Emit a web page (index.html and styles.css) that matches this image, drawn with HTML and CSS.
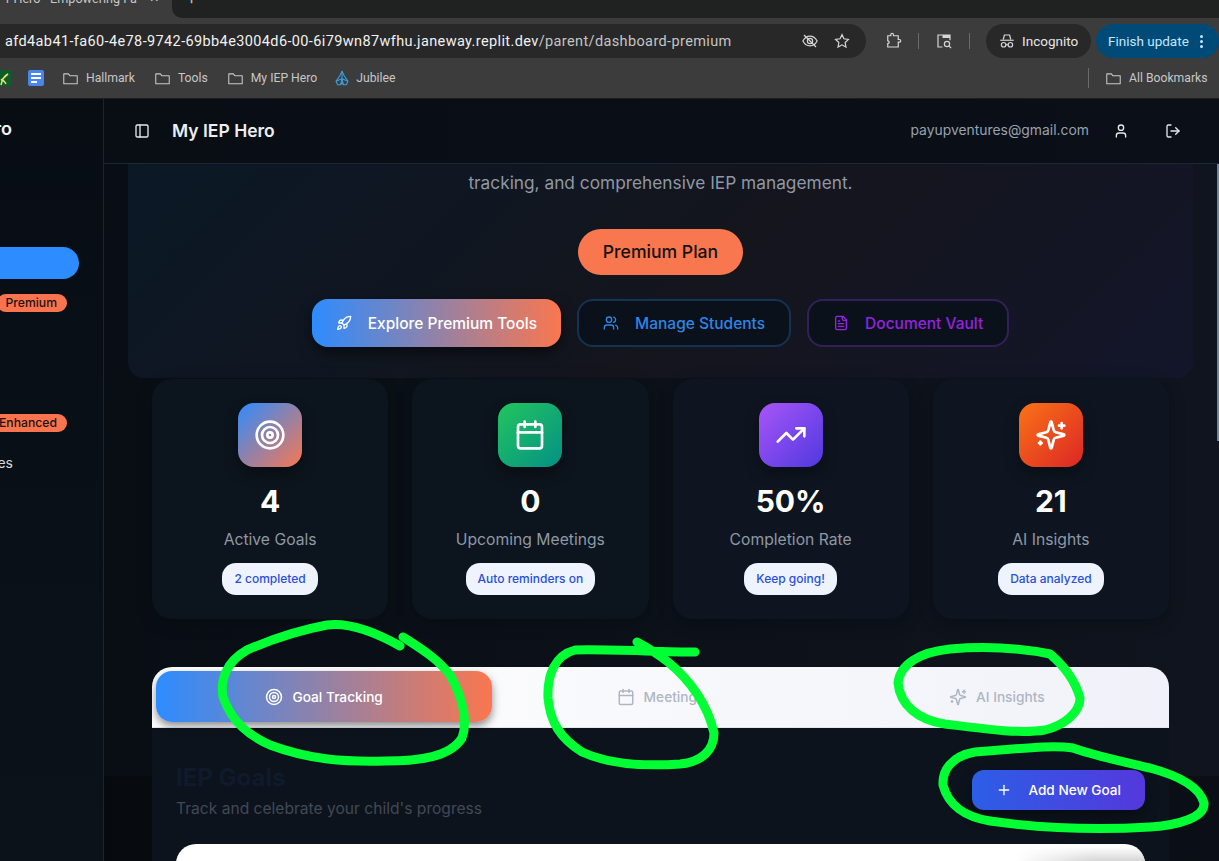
FILE: index.html
```html
<!DOCTYPE html>
<html lang="en">
<head>
    <meta charset="UTF-8">
    <meta name="viewport" content="width=device-width, initial-scale=1.0">
    <title>My IEP Hero - Dashboard</title>

    <link rel="stylesheet" href="styles.css">
</head>
<body>

    <!-- Icon sprite -->
    <svg class="sprite" xmlns="http://www.w3.org/2000/svg">
        <symbol id="i-target" viewBox="0 0 24 24"><circle cx="12" cy="12" r="10"/><circle cx="12" cy="12" r="6"/><circle cx="12" cy="12" r="2"/></symbol>
        <symbol id="i-calendar" viewBox="0 0 24 24"><path d="M8 2v4"/><path d="M16 2v4"/><rect width="18" height="18" x="3" y="4" rx="2"/><path d="M3 10h18"/></symbol>
        <symbol id="i-trend" viewBox="0 0 24 24"><polyline points="22 7 13.5 15.5 8.5 10.5 2 17"/><polyline points="16 7 22 7 22 13"/></symbol>
        <symbol id="i-sparkles" viewBox="0 0 24 24"><path d="M9.937 15.5A2 2 0 0 0 8.5 14.063l-6.135-1.582a.5.5 0 0 1 0-.962L8.5 9.936A2 2 0 0 0 9.937 8.5l1.582-6.135a.5.5 0 0 1 .963 0L14.063 8.5A2 2 0 0 0 15.5 9.937l6.135 1.581a.5.5 0 0 1 0 .964L15.5 14.063a2 2 0 0 0-1.437 1.437l-1.582 6.135a.5.5 0 0 1-.963 0z"/><path d="M20 3v4"/><path d="M22 5h-4"/><path d="M4 17v2"/><path d="M5 18H3"/></symbol>
        <symbol id="i-rocket" viewBox="0 0 24 24"><path d="M4.5 16.5c-1.5 1.26-2 5-2 5s3.74-.5 5-2c.71-.84.7-2.13-.09-2.91a2.18 2.18 0 0 0-2.91-.09z"/><path d="m12 15-3-3a22 22 0 0 1 2-3.95A12.88 12.88 0 0 1 22 2c0 2.72-.78 7.5-6 11a22.35 22.35 0 0 1-4 2z"/><path d="M9 12H4s.55-3.03 2-4c1.62-1.08 5 0 5 0"/><path d="M12 15v5s3.03-.55 4-2c1.08-1.62 0-5 0-5"/></symbol>
        <symbol id="i-users" viewBox="0 0 24 24"><path d="M16 21v-2a4 4 0 0 0-4-4H6a4 4 0 0 0-4 4v2"/><circle cx="9" cy="7" r="4"/><path d="M22 21v-2a4 4 0 0 0-3-3.87"/><path d="M16 3.13a4 4 0 0 1 0 7.75"/></symbol>
        <symbol id="i-file" viewBox="0 0 24 24"><path d="M15 2H6a2 2 0 0 0-2 2v16a2 2 0 0 0 2 2h12a2 2 0 0 0 2-2V7Z"/><path d="M14 2v4a2 2 0 0 0 2 2h4"/><path d="M10 9H8"/><path d="M16 13H8"/><path d="M16 17H8"/></symbol>
        <symbol id="i-plus" viewBox="0 0 24 24"><path d="M5 12h14"/><path d="M12 5v14"/></symbol>
        <symbol id="i-panel" viewBox="0 0 24 24"><rect width="18" height="18" x="3" y="3" rx="2"/><path d="M9 3v18"/></symbol>
        <symbol id="i-user" viewBox="0 0 24 24"><path d="M19 21v-2a4 4 0 0 0-4-4H9a4 4 0 0 0-4 4v2"/><circle cx="12" cy="7" r="4"/></symbol>
        <symbol id="i-logout" viewBox="0 0 24 24"><path d="M9 21H5a2 2 0 0 1-2-2V5a2 2 0 0 1 2-2h4"/><polyline points="16 17 21 12 16 7"/><line x1="21" x2="9" y1="12" y2="12"/></symbol>
        <symbol id="i-folder" viewBox="0 0 24 24"><path d="M2.5 5.5h6.5l2 2.5h10.500v11.500h-19z"/></symbol>
    </svg>

    <!-- Browser chrome -->
    <header class="browser">
        <div class="tabstrip">
            <div class="tab-clip">
                <span class="tab-title">r Hero - Empowering Fa</span>
                <span class="tab-close">×</span>
            </div>
            <div class="tab-rest"><span class="tab-new">+</span></div>
        </div>

        <div class="toolbar">
            <div class="urlbar">
                <span class="url">afd4ab41-fa60-4e78-9742-69bb4e3004d6-00-6i79wn87wfhu.janeway.replit.dev<span class="url-path">/parent/dashboard-premium</span></span>
                <svg class="chrome-icon eye-icon" viewBox="0 0 24 24"><path d="M2.500 12s3.500-6.500 9.500-6.500 9.500 6.500 9.500 6.500-3.500 6.500-9.500 6.500-9.500-6.500-9.500-6.500z"/><circle cx="12" cy="12" r="3.500"/><path d="M4 4l16 16"/></svg>
                <svg class="chrome-icon star-icon" viewBox="0 0 24 24"><path d="M12 3.500l2.600 5.500 6 .8-4.400 4.200 1.100 6L12 17.100 6.700 20l1.100-6-4.400-4.200 6-.8z"/></svg>
            </div>
            <svg class="chrome-icon puzzle-icon" viewBox="0 0 24 24"><path d="M5 5h4V3.500a1.800 1.800 0 0 1 3.600 0V5H19v5h1.500a1.800 1.800 0 0 1 0 3.600H19V20H5v-4.500a1.900 1.900 0 0 0 0-3.800V8.500z"/></svg>
            <span class="tool-sep"></span>
            <svg class="chrome-icon lens-icon" viewBox="0 0 24 24"><path d="M10 20H4V4h16v7"/><path d="M10 4h10v4H10z" class="lens-fill"/><circle cx="16" cy="16" r="3.500"/><path d="M19 19l2.500 2.500"/></svg>
            <span class="tool-sep"></span>
            <div class="incognito">
                <svg class="chrome-icon" viewBox="0 0 24 24"><path d="M7 10l1.500-6h7L17 10"/><path d="M3 11h18"/><circle cx="7.500" cy="17" r="3"/><circle cx="16.500" cy="17" r="3"/><path d="M10.500 17h3"/></svg>
                <span>Incognito</span>
            </div>
            <div class="update">
                <span>Finish update</span>
                <span class="update-dots"><i></i><i></i><i></i></span>
            </div>
        </div>

        <div class="bookmarks">
            <span class="bm-clipped">
                <svg viewBox="0 0 16 16"><rect width="16" height="16" fill="#0d5c2c"/><path d="M6 15c1-5 3-9 7-11-3 3-5 5-7 6 3 0 4 2 5 4" fill="none" stroke="#e9e06a" stroke-width="1.500"/></svg>
            </span>
            <span class="bm-docs"><i></i><i></i><i></i></span>
            <span class="bm"><svg class="folder"><use href="#i-folder"/></svg>Hallmark</span>
            <span class="bm"><svg class="folder"><use href="#i-folder"/></svg>Tools</span>
            <span class="bm"><svg class="folder"><use href="#i-folder"/></svg>My IEP Hero</span>
            <span class="bm bm-jubilee">
                <svg viewBox="0 0 24 24"><path d="M12 2L8.500 9 3 17l2.500 5H10l2-3 2 3h4.500l2.500-5-5.500-8z"/><path d="M12 2v11"/><path d="M3 17l9-4 9 4"/><path d="M10 22l2-9 2 9"/></svg>Jubilee
            </span>
            <span class="bm-right"><svg class="folder"><use href="#i-folder"/></svg>All Bookmarks</span>
        </div>
    </header>

    <!-- App -->
    <div class="app">
        <aside class="sidebar">
            <div class="side-logo">My IEP Hero</div>
            <div class="side-active"></div>
            <div class="side-row side-premium"><span class="side-badge">Premium</span></div>
            <div class="side-row side-enhanced"><span class="side-badge">Enhanced</span></div>
            <div class="side-row side-last">Resources</div>
        </aside>

        <main class="main">
            <div class="topbar">
                <svg class="icon topbar-panel"><use href="#i-panel"/></svg>
                <span class="topbar-title">My IEP Hero</span>
                <span class="topbar-email">payupventures@gmail.com</span>
                <svg class="icon topbar-user"><use href="#i-user"/></svg>
                <svg class="icon topbar-logout"><use href="#i-logout"/></svg>
            </div>

            <div class="content">
                <section class="hero">
                    <p class="hero-text">tracking, and comprehensive IEP management.</p>
                    <span class="plan-badge">Premium Plan</span>
                    <div class="hero-actions">
                        <button class="btn btn-explore"><svg class="icon"><use href="#i-rocket"/></svg>Explore Premium Tools</button>
                        <button class="btn btn-students"><svg class="icon"><use href="#i-users"/></svg>Manage Students</button>
                        <button class="btn btn-vault"><svg class="icon"><use href="#i-file"/></svg>Document Vault</button>
                    </div>
                </section>

                <section class="stats">
                    <div class="stat">
                        <div class="stat-icon grad-brand"><svg class="icon"><use href="#i-target"/></svg></div>
                        <div class="stat-value">4</div>
                        <div class="stat-label">Active Goals</div>
                        <span class="stat-pill">2 completed</span>
                    </div>
                    <div class="stat">
                        <div class="stat-icon grad-green"><svg class="icon"><use href="#i-calendar"/></svg></div>
                        <div class="stat-value">0</div>
                        <div class="stat-label">Upcoming Meetings</div>
                        <span class="stat-pill">Auto reminders on</span>
                    </div>
                    <div class="stat">
                        <div class="stat-icon grad-purple"><svg class="icon"><use href="#i-trend"/></svg></div>
                        <div class="stat-value">50%</div>
                        <div class="stat-label">Completion Rate</div>
                        <span class="stat-pill">Keep going!</span>
                    </div>
                    <div class="stat">
                        <div class="stat-icon grad-orange"><svg class="icon"><use href="#i-sparkles"/></svg></div>
                        <div class="stat-value">21</div>
                        <div class="stat-label">AI Insights</div>
                        <span class="stat-pill">Data analyzed</span>
                    </div>
                </section>

                <section class="tabs-card">
                    <div class="tabs">
                        <div class="tab tab-active"><svg class="icon"><use href="#i-target"/></svg>Goal Tracking</div>
                        <div class="tab"><svg class="icon"><use href="#i-calendar"/></svg>Meetings</div>
                        <div class="tab"><svg class="icon"><use href="#i-sparkles"/></svg>AI Insights</div>
                    </div>
                    <div class="panel">
                        <div class="panel-head">
                            <div>
                                <h2>IEP Goals</h2>
                                <p>Track and celebrate your child's progress</p>
                            </div>
                            <button class="btn-add"><svg class="icon"><use href="#i-plus"/></svg>Add New Goal</button>
                        </div>
                        <div class="goal-card"><span class="goal-shade"></span></div>
                    </div>
                </section>
            </div>
            <span class="scroll-thumb"></span>
        </main>
    </div>

    <!-- Hand drawn marks on top of the screenshot -->
    <svg class="marks" viewBox="0 0 1219 861" xmlns="http://www.w3.org/2000/svg">
        <path d="M400 646C375 632 350 622 327 625C300 630 270 640 247 650C226 662 220 680 223 697C232 722 248 735 270 745C310 760 345 762 385 761C420 761 450 757 462 738C468 722 463 698 450 675C437 658 420 648 403 637"/>
        <path d="M695 652C660 652 610 649 575 650C555 655 547 675 548 698C550 722 560 738 582 752C610 765 650 766 680 764C702 762 714 750 714 733C708 705 690 680 668 662C658 654 648 648 637 642"/>
        <path d="M1050 654C1020 648 985 646 950 649C920 652 900 664 898 683C900 705 918 720 945 724C985 729 1020 734 1045 730C1065 725 1080 712 1080 698C1075 680 1063 665 1050 654"/>
        <path d="M1073 748C1050 744 1010 750 975 752C952 756 942 770 943 785C948 805 965 817 990 821C1040 828 1100 830 1150 827C1180 825 1205 817 1204 803C1200 788 1180 776 1150 768C1125 762 1095 756 1073 748"/>
    </svg>

</body>
</html>
```

FILE: styles.css
```css
* {
    box-sizing: border-box;
}

html, body {
    margin: 0;
    height: 100%;
    overflow: hidden;
}

body {
    width: 1219px;
    height: 861px;
    background: #0a0f16;
    color: #e5e7eb;
    font-family: Inter, "Liberation Sans", sans-serif;
    display: flex;
    flex-direction: column;
}

.sprite {
    display: none;
}

.icon {
    fill: none;
    stroke: currentColor;
    stroke-width: 2;
    stroke-linecap: round;
    stroke-linejoin: round;
    flex-shrink: 0;
}

/* Browser chrome */
.browser {
    height: 99px;
    flex-shrink: 0;
    background: #3c3c3c;
    border-bottom: 1px solid #1d1d1d;
    font-family: Roboto, Inter, sans-serif;
}

.tabstrip {
    height: 18px;
    display: flex;
}

.tab-clip {
    width: 172px;
    height: 18px;
    overflow: hidden;
    display: flex;
    padding-left: 6px;
    font-size: 12.6px;
    color: #c7c7c7;
}

.tab-title {
    margin-top: -9px;
    line-height: 16px;
    white-space: nowrap;
    overflow: hidden;
    width: 135px;
}

.tab-close {
    margin: -10px 0 0 9px;
    line-height: 16px;
    font-size: 16px;
}

.tab-rest {
    flex: 1;
    background: #202221;
    border-bottom-left-radius: 10px;
    overflow: hidden;
    padding-left: 15px;
}

.tab-new {
    display: block;
    margin-top: -9px;
    line-height: 16px;
    font-size: 16px;
    color: #bdbdbd;
}

.toolbar {
    height: 34px;
    margin-top: 6px;
    display: flex;
    align-items: center;
}

.urlbar {
    width: 866px;
    height: 34px;
    background: #282828;
    border-radius: 0 17px 17px 0;
    display: flex;
    align-items: center;
    padding-left: 5px;
}

.url {
    flex: 1;
    font-size: 14.5px;
    color: #f1f1f1;
    letter-spacing: 0.38px;
    white-space: nowrap;
}

.url-path {
    color: #c4c4c4;
}

.chrome-icon {
    width: 18px;
    height: 18px;
    fill: none;
    stroke: #d6d6d6;
    stroke-width: 1.6;
    flex-shrink: 0;
}

.eye-icon {
    margin-right: 14px;
}

.star-icon {
    margin-right: 15px;
}

.puzzle-icon {
    margin-left: 18px;
}

.tool-sep {
    width: 1px;
    height: 16px;
    background: #6a6a6a;
    margin: 0 16px;
}

.lens-fill {
    fill: #d6d6d6;
    stroke: none;
}

.incognito {
    width: 105px;
    height: 34px;
    background: #282828;
    border-radius: 17px;
    display: flex;
    align-items: center;
    gap: 6px;
    padding-left: 12px;
    font-size: 13.5px;
    color: #e6e6e6;
}

.update {
    width: 123px;
    height: 34px;
    margin-left: 5px;
    background: #004a77;
    display: flex;
    align-items: center;
    padding-left: 12px;
    gap: 11px;
    font-size: 13.5px;
    color: #c2e7ff;
    border-radius: 17px;
    white-space: nowrap;
}

.update-dots {
    display: flex;
    flex-direction: column;
    gap: 2px;
}

.update-dots i {
    display: block;
    width: 3px;
    height: 3px;
    border-radius: 50%;
    background: #c2e7ff;
}

.bookmarks {
    height: 40px;
    display: flex;
    align-items: center;
    font-size: 12.2px;
    color: #c7c7c7;
}

.bm-clipped {
    width: 11px;
    height: 16px;
    overflow: hidden;
    display: flex;
    justify-content: flex-end;
}

.bm-clipped svg {
    width: 16px;
    height: 16px;
    flex-shrink: 0;
}

.bm-docs {
    width: 16px;
    height: 16px;
    margin-left: 17px;
    background: #4a86f0;
    border-radius: 2px;
    display: flex;
    flex-direction: column;
    justify-content: center;
    gap: 2px;
    padding: 0 3px;
}

.bm-docs i {
    display: block;
    height: 2px;
    background: #fff;
}

.bm-docs i:last-child {
    width: 6px;
}

.bm {
    display: flex;
    align-items: center;
    gap: 7px;
    margin-left: 18px;
}

.bm + .bm {
    margin-left: 19px;
}

.folder {
    width: 17px;
    height: 17px;
    fill: none;
    stroke: #c7c7c7;
    stroke-width: 1.500;
    stroke-linejoin: round;
}

.bm + .bm-jubilee {
    margin-left: 17px;
    gap: 6px;
}

.bm-jubilee svg {
    width: 16px;
    height: 16px;
    fill: none;
    stroke: #3aa0e0;
    stroke-width: 1.600;
    stroke-linejoin: round;
}

.bm-right {
    margin-left: auto;
    width: 131px;
    height: 20px;
    border-left: 1px solid #6a6a6a;
    display: flex;
    align-items: center;
    gap: 7px;
    padding-left: 16px;
    white-space: nowrap;
}

/* App layout */
.app {
    flex: 1;
    display: flex;
    min-height: 0;
}

.sidebar {
    width: 104px;
    flex-shrink: 0;
    background: linear-gradient(180deg, #080d14, #0b1219);
    border-right: 1px solid #1a2531;
    overflow: hidden;
    font-size: 14px;
    color: #d5d9df;
}

.side-logo {
    margin: 19px 0 0 -100px;
    width: 112px;
    text-align: right;
    font-size: 18px;
    font-weight: 600;
    color: #f2f4f7;
    line-height: 22px;
    white-space: nowrap;
}

.side-active {
    height: 32px;
    width: 79px;
    margin-top: 107px;
    background: #2d8cff;
    border-radius: 0 16px 16px 0;
}

.side-row {
    width: 67px;
    display: flex;
    justify-content: flex-end;
    white-space: nowrap;
}

.side-premium {
    margin-top: 15px;
}

.side-enhanced {
    margin-top: 102px;
}

.side-last {
    width: 13px;
    margin-top: 21px;
    line-height: 20px;
}

.side-badge {
    height: 18px;
    line-height: 18px;
    padding: 0 10px 0 8px;
    background: #f9744e;
    color: #1a1210;
    font-size: 12.2px;
    font-weight: 500;
    border-radius: 9px;
}

.main {
    flex: 1;
    min-width: 0;
    display: flex;
    flex-direction: column;
    position: relative;
    background:
        linear-gradient(180deg, transparent 677px, rgba(0, 0, 0, 0.28) 677px),
        linear-gradient(90deg, #090e15, #0f141e);
}

.topbar {
    height: 65px;
    flex-shrink: 0;
    display: flex;
    align-items: center;
    padding: 0 38px 0 30px;
    background: linear-gradient(90deg, #090e15, #0a0f18);
    border-bottom: 1px solid #1c2733;
    position: relative;
    z-index: 1;
}

.topbar .icon {
    width: 16px;
    height: 16px;
    stroke-width: 2;
    color: #e6e8eb;
}

.topbar-title {
    margin: 0 0 2px 22px;
    font-size: 17.5px;
    font-weight: 600;
    color: #eceef1;
}

.topbar-email {
    margin: 0 0 2px auto;
    font-size: 13.9px;
    color: #98a1ae;
}

.topbar .topbar-user {
    margin-left: 24px;
}

.topbar .topbar-logout {
    margin-left: 36px;
}

.content {
    flex: 1;
    min-height: 0;
    overflow: hidden;
    padding: 0 50px 0 24px;
}

/* Hero */
.hero {
    margin-right: -24px;
    height: 214px;
    background: linear-gradient(135deg, #0b1826, #14151d 55%, #13162a);
    border-radius: 0 0 16px 16px;
    display: flex;
    flex-direction: column;
    align-items: center;
    padding-top: 7px;
}

.hero-text {
    margin: 0;
    height: 24px;
    line-height: 24px;
    font-size: 17.3px;
    color: #8f98a5;
}

.plan-badge {
    margin-top: 34px;
    height: 46px;
    line-height: 46px;
    padding: 0 25px;
    background: #f9774f;
    color: #14110f;
    font-size: 17.6px;
    font-weight: 500;
    border-radius: 23px;
}

.hero-actions {
    margin-top: 24px;
    display: flex;
    gap: 16px;
}

.btn {
    height: 48px;
    display: flex;
    align-items: center;
    gap: 16px;
    padding: 0 24px;
    border-radius: 16px;
    font-family: inherit;
    font-size: 15.5px;
    font-weight: 500;
    background: #0b111a;
    border: 2px solid;
    white-space: nowrap;
}

.btn .icon {
    width: 16px;
    height: 16px;
}

.btn-explore {
    color: #fff;
    border: 0;
    background: linear-gradient(90deg, #2d8cff, #f9774f);
    box-shadow: 0 6px 14px rgba(0, 0, 0, 0.5);
}

.btn-students {
    color: #2d85e6;
    border-color: #143253;
}

.btn-vault {
    color: #9323e0;
    border-color: #33205a;
}

/* Stat cards */
.stats {
    margin: 1px 0 0;
    display: grid;
    grid-template-columns: repeat(4, 1fr);
    gap: 24px;
    padding-left: 24px;
}

.stat {
    height: 240px;
    background: #0c141d;
    border-radius: 20px;
    box-shadow: 0 4px 16px rgba(0, 0, 0, 0.25);
    display: flex;
    flex-direction: column;
    align-items: center;
    padding-top: 24px;
}

.stat:nth-child(n+3) {
    background: #0e1520;
}

.stat-icon {
    width: 64px;
    height: 64px;
    border-radius: 16px;
    display: flex;
    align-items: center;
    justify-content: center;
    box-shadow: 0 6px 14px rgba(0, 0, 0, 0.35);
    color: #fff;
}

.stat-icon .icon {
    width: 32px;
    height: 32px;
}

.grad-brand {
    background: linear-gradient(135deg, #2d8cff, #f9774f);
}

.grad-green {
    background: linear-gradient(135deg, #22c55e, #059085);
}

.grad-purple {
    background: linear-gradient(135deg, #a855f7, #4f39e0);
}

.grad-orange {
    background: linear-gradient(135deg, #f97316, #dc2626);
}

.stat-value {
    margin-top: 16px;
    height: 36px;
    line-height: 36px;
    font-size: 30px;
    font-weight: 700;
    color: #fff;
}

.stat-label {
    margin-top: 9px;
    height: 24px;
    line-height: 24px;
    font-size: 15.7px;
    color: #8f98a5;
}

.stat-pill {
    margin-top: 11px;
    height: 32px;
    line-height: 32px;
    padding: 0 12px;
    font-size: 12px;
    font-weight: 500;
    color: #2a4fd8;
    background: #eef3fd;
    border-radius: 14px;
}

/* Tabs card */
.tabs-card {
    margin: 48px 0 0 24px;
    border-radius: 20px 20px 0 0;
    overflow: hidden;
}

.tabs {
    height: 61px;
    padding: 4px 4px 5px;
    display: grid;
    grid-template-columns: repeat(3, 1fr);
    background: linear-gradient(90deg, #ffffff, #f1f2f9);
    border-bottom: 1px solid #e5e7ef;
}

.tab {
    display: flex;
    align-items: center;
    justify-content: center;
    gap: 9px;
    font-size: 13.7px;
    font-weight: 500;
    color: #aeb6c4;
    border-radius: 16px;
}

.tab .icon {
    width: 18px;
    height: 18px;
}

.tab-active {
    color: #fff;
    background: linear-gradient(90deg, #2d8cff, #f9774f);
    box-shadow: 0 4px 8px rgba(0, 0, 0, 0.45);
}

.panel {
    height: 200px;
    background: #0c131c;
    padding: 24px 24px 0;
}

.panel-head {
    display: flex;
    justify-content: space-between;
    align-items: flex-start;
}

.panel h2 {
    margin: 10px 0 0;
    height: 32px;
    line-height: 32px;
    font-size: 24px;
    font-weight: 700;
    color: #0f1a2c;
}

.panel p {
    margin: 3px 0 0;
    height: 24px;
    line-height: 24px;
    font-size: 15.6px;
    color: #414955;
}

.btn-add {
    margin-top: 18px;
    height: 40px;
    display: flex;
    align-items: center;
    gap: 16px;
    padding: 0 24px;
    border: 0;
    border-radius: 12px;
    font-family: inherit;
    font-size: 13.6px;
    font-weight: 500;
    color: #fff;
    background: linear-gradient(90deg, #2c5ee6, #5438dc);
    box-shadow: 0 6px 14px rgba(0, 0, 0, 0.35);
}

.btn-add .icon {
    width: 16px;
    height: 16px;
}

.goal-card {
    margin-top: 23px;
    height: 60px;
    background: #fff;
    border-radius: 20px 20px 0 0;
    overflow: hidden;
    position: relative;
}

.goal-shade {
    position: absolute;
    top: 3px;
    right: 0;
    width: 130px;
    height: 14px;
    background: linear-gradient(180deg, rgba(255, 255, 255, 0), #d6d6d6);
    -webkit-mask-image: linear-gradient(90deg, transparent, #000 60%);
    mask-image: linear-gradient(90deg, transparent, #000 60%);
}

.scroll-thumb {
    position: absolute;
    right: 0;
    top: 54px;
    width: 2px;
    height: 288px;
    background: #70849a;
}

/* Green marker strokes */
.marks {
    position: absolute;
    top: 0;
    left: 0;
    width: 1219px;
    height: 861px;
    fill: none;
    stroke: #00ff33;
    stroke-width: 9;
    stroke-linecap: round;
    stroke-linejoin: round;
    pointer-events: none;
}
```
